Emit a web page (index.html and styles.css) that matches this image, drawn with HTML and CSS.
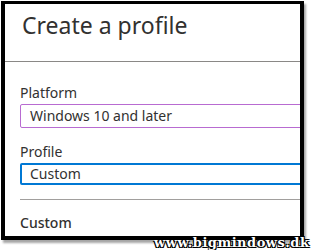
FILE: index.html
```html
<!DOCTYPE html>
<html lang="en">
<head>
    <meta charset="UTF-8">
    <meta name="viewport" content="width=device-width, initial-scale=1.0">
    <title>Create a profile</title>
    <link rel="stylesheet" href="styles.css">
</head>
<body>
    <div class="frame">
        <div class="header">
            <h1>Create a profile</h1>
        </div>
        <div class="content">
            <div class="field">
                <label>Platform</label>
                <div class="select platform">Windows 10 and later</div>
            </div>
            <div class="field">
                <label>Profile</label>
                <div class="select profile">Custom</div>
            </div>
            <hr>
            <div class="section">Custom</div>
        </div>
    </div>
    <div class="watermark">www.bigmindows.dk</div>
</body>
</html>
```

FILE: styles.css
```css
body { margin: 0; background: #fff; font-family: "Noto Sans", "Open Sans", sans-serif; color: #323130; position: relative; width: 312px; height: 250px; overflow: hidden; }
.frame { margin: 1px 0 0 1px; width: 295px; height: 232px; border: solid #000; border-width: 3px 4px 4px 4px; box-shadow: 2px 3px 2px rgba(0,0,0,0.35); overflow: hidden; background: #fff; }
.header { height: 57px; border-bottom: 1px solid #8a8886; padding-left: 17px; }
h1 { margin: 0; padding-top: 5px; font-size: 23px; font-weight: 400; line-height: 32px; }
.content { padding-left: 15px; }
.field { padding-top: 21px; }
.field + .field { padding-top: 14px; }
label { display: block; font-size: 14px; line-height: 19px; margin-bottom: 2px; }
.select { width: 300px; height: 22px; line-height: 22px; padding-left: 9px; border: 1px solid #b86bd1; border-radius: 2px; font-size: 14px; }
.select.profile { height: 18px; line-height: 18px; border: 2px solid #0078d4; padding-left: 8px; }
hr { margin: 14px 0 0 0; border: none; border-top: 1px solid #a19f9d; }
.section { padding-top: 13px; font-size: 14px; font-weight: 500; line-height: 19px; }
.watermark { position: absolute; left: 154px; top: 235px; font-family: "DejaVu Serif", serif; font-weight: bold; font-size: 13px; letter-spacing: 0.5px; color: #fff; text-shadow: 1px 1px 0 #000, -1px -1px 0 #000, 1px -1px 0 #000, -1px 1px 0 #000; }
```
